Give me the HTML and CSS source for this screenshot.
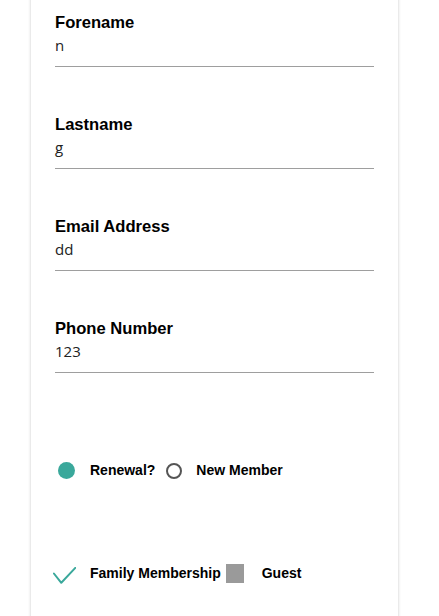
FILE: index.html
```html
<!DOCTYPE html>
<html lang="en">
<head>
<meta charset="utf-8">
<title>Membership form</title>
<link rel="stylesheet" href="styles.css">
</head>
<body>
<div class="card">
  <div class="field">
    <div class="label">Forename</div>
    <div class="value">n</div>
  </div>
  <div class="field">
    <div class="label">Lastname</div>
    <div class="value">g</div>
  </div>
  <div class="field">
    <div class="label">Email Address</div>
    <div class="value">dd</div>
  </div>
  <div class="field">
    <div class="label">Phone Number</div>
    <div class="value">123</div>
  </div>

  <div class="radio-row">
    <span class="dot"></span>
    <span class="opt">Renewal?</span>
    <span class="ring"></span>
    <span class="opt">New Member</span>
  </div>

  <div class="check-row">
    <svg class="check" width="23" height="17" viewBox="0 0 23 17"><path d="M0.9 6.5 L8.3 15.8 L22.3 0.9" fill="none" stroke="#3aa89b" stroke-width="2" stroke-linecap="round" stroke-linejoin="round"/></svg>
    <span class="opt">Family Membership</span>
    <span class="box"></span>
    <span class="opt">Guest</span>
  </div>
</div>
</body>
</html>
```

FILE: styles.css
```css
html, body {
  margin: 0;
  padding: 0;
  background: #ffffff;
}

.card {
  margin: -20px 0 0 31px;
  width: 367px;
  min-height: 660px;
  box-sizing: border-box;
  padding: 33px 24px 0 24px;
  background: #ffffff;
  box-shadow: 0 0 3px rgba(0, 0, 0, 0.22);
}

.field {
  margin-bottom: 48px;
}

.label {
  font-family: "Liberation Sans", Arial, sans-serif;
  font-weight: bold;
  font-size: 16.6px;
  line-height: 20px;
  color: #000;
}

.value {
  margin-top: 2px;
  font-family: "Open Sans", sans-serif;
  font-size: 15px;
  line-height: 20px;
  color: #222;
  padding-bottom: 11px;
  border-bottom: 1px solid #9e9e9e;
}

.radio-row {
  display: flex;
  align-items: center;
  margin-top: 89px;
  height: 17px;
  padding-left: 3px;
}

.opt {
  font-family: "Liberation Sans", Arial, sans-serif;
  font-weight: bold;
  font-size: 14px;
  line-height: 17px;
  color: #000;
}

.dot {
  width: 17px;
  height: 17px;
  border-radius: 50%;
  background: #3aa89b;
  margin-right: 15px;
}

.ring {
  width: 16px;
  height: 16px;
  box-sizing: border-box;
  border: 2px solid #555;
  border-radius: 50%;
  margin: 0 14px 0 11px;
}

.check-row {
  display: flex;
  align-items: center;
  margin-top: 84px;
  height: 20px;
  margin-left: -2px;
}

.check {
  display: block;
  margin-right: 14px;
  margin-top: 4px;
}

.box {
  width: 18px;
  height: 19px;
  background: #9a9a9a;
  margin: 0 18px 0 5px;
}
```
